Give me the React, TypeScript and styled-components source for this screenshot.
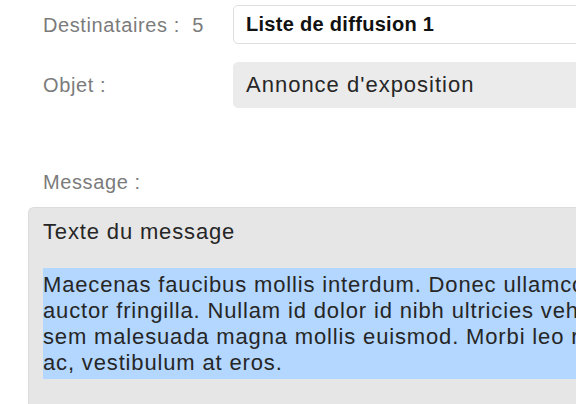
import React from 'react';
import styled, { createGlobalStyle } from 'styled-components';

const GlobalStyle = createGlobalStyle`
  html, body {
    margin: 0;
    padding: 0;
    background: #ffffff;
    overflow: hidden;
  }
  body {
    font-family: "Liberation Sans", Arial, Helvetica, sans-serif;
    -webkit-font-smoothing: antialiased;
  }
`;

const Page = styled.div`
  width: 576px;
  height: 404px;
  overflow: hidden;
  display: flex;
  flex-direction: column;
`;

const Form = styled.div`
  display: grid;
  grid-template-columns: 190px 420px;
  row-gap: 18px;
  padding: 5px 0 0 43px;
  align-items: center;
`;

const Label = styled.span`
  font-size: 20px;
  line-height: 24px;
  letter-spacing: 0.6px;
  color: #7b7b7b;
  white-space: pre;
`;

const Field = styled.div<{ $filled?: boolean }>`
  box-sizing: border-box;
  height: ${p => (p.$filled ? '46px' : '39px')};
  display: flex;
  align-items: center;
  padding: 0 12px;
  border-radius: 5px;
  background: ${p => (p.$filled ? '#ebebeb' : '#ffffff')};
  border: 1px solid ${p => (p.$filled ? '#ebebeb' : '#dedede')};
  font-size: ${p => (p.$filled ? '22px' : '20px')};
  letter-spacing: ${p => (p.$filled ? '1px' : '0.3px')};
  font-weight: ${p => (p.$filled ? 400 : 700)};
  color: ${p => (p.$filled ? '#262626' : '#111111')};
  white-space: nowrap;
`;

const MessageLabel = styled(Label)`
  display: block;
  margin: 62px 0 0 43px;
`;

const MessageBox = styled.div`
  margin: 13px 0 0 28px;
  width: 600px;
  height: 220px;
  flex-shrink: 0;
  box-sizing: border-box;
  background: #e6e6e6;
  border-top: 1px solid #dcdcdc;
  border-left: 1px solid #dcdcdc;
  border-top-left-radius: 6px;
  padding: 11px 0 0 14px;
  font-size: 22px;
  letter-spacing: 0.85px;
  color: #262626;
`;

const Heading = styled.div`
  line-height: 26px;
  margin-bottom: 23px;
`;

const Selected = styled.div`
  background: #b3d7ff;
  width: 560px;
  padding: 4px 0 3px;
  line-height: 26px;
  white-space: nowrap;
  overflow: hidden;
`;

const lines = [
  'Maecenas faucibus mollis interdum. Donec ullamco',
  'auctor fringilla. Nullam id dolor id nibh ultricies vehi',
  'sem malesuada magna mollis euismod. Morbi leo r',
  'ac, vestibulum at eros.',
];

export default function App() {
  return (
    <>
      <GlobalStyle />
      <Page>
        <Form>
          <Label>{'Destinataires :  5'}</Label>
          <Field>Liste de diffusion 1</Field>
          <Label>Objet :</Label>
          <Field $filled>Annonce d'exposition</Field>
        </Form>
        <MessageLabel>Message :</MessageLabel>
        <MessageBox>
          <Heading>Texte du message</Heading>
          <Selected>
            {lines.map(l => (
              <div key={l}>{l}</div>
            ))}
          </Selected>
        </MessageBox>
      </Page>
    </>
  );
}
